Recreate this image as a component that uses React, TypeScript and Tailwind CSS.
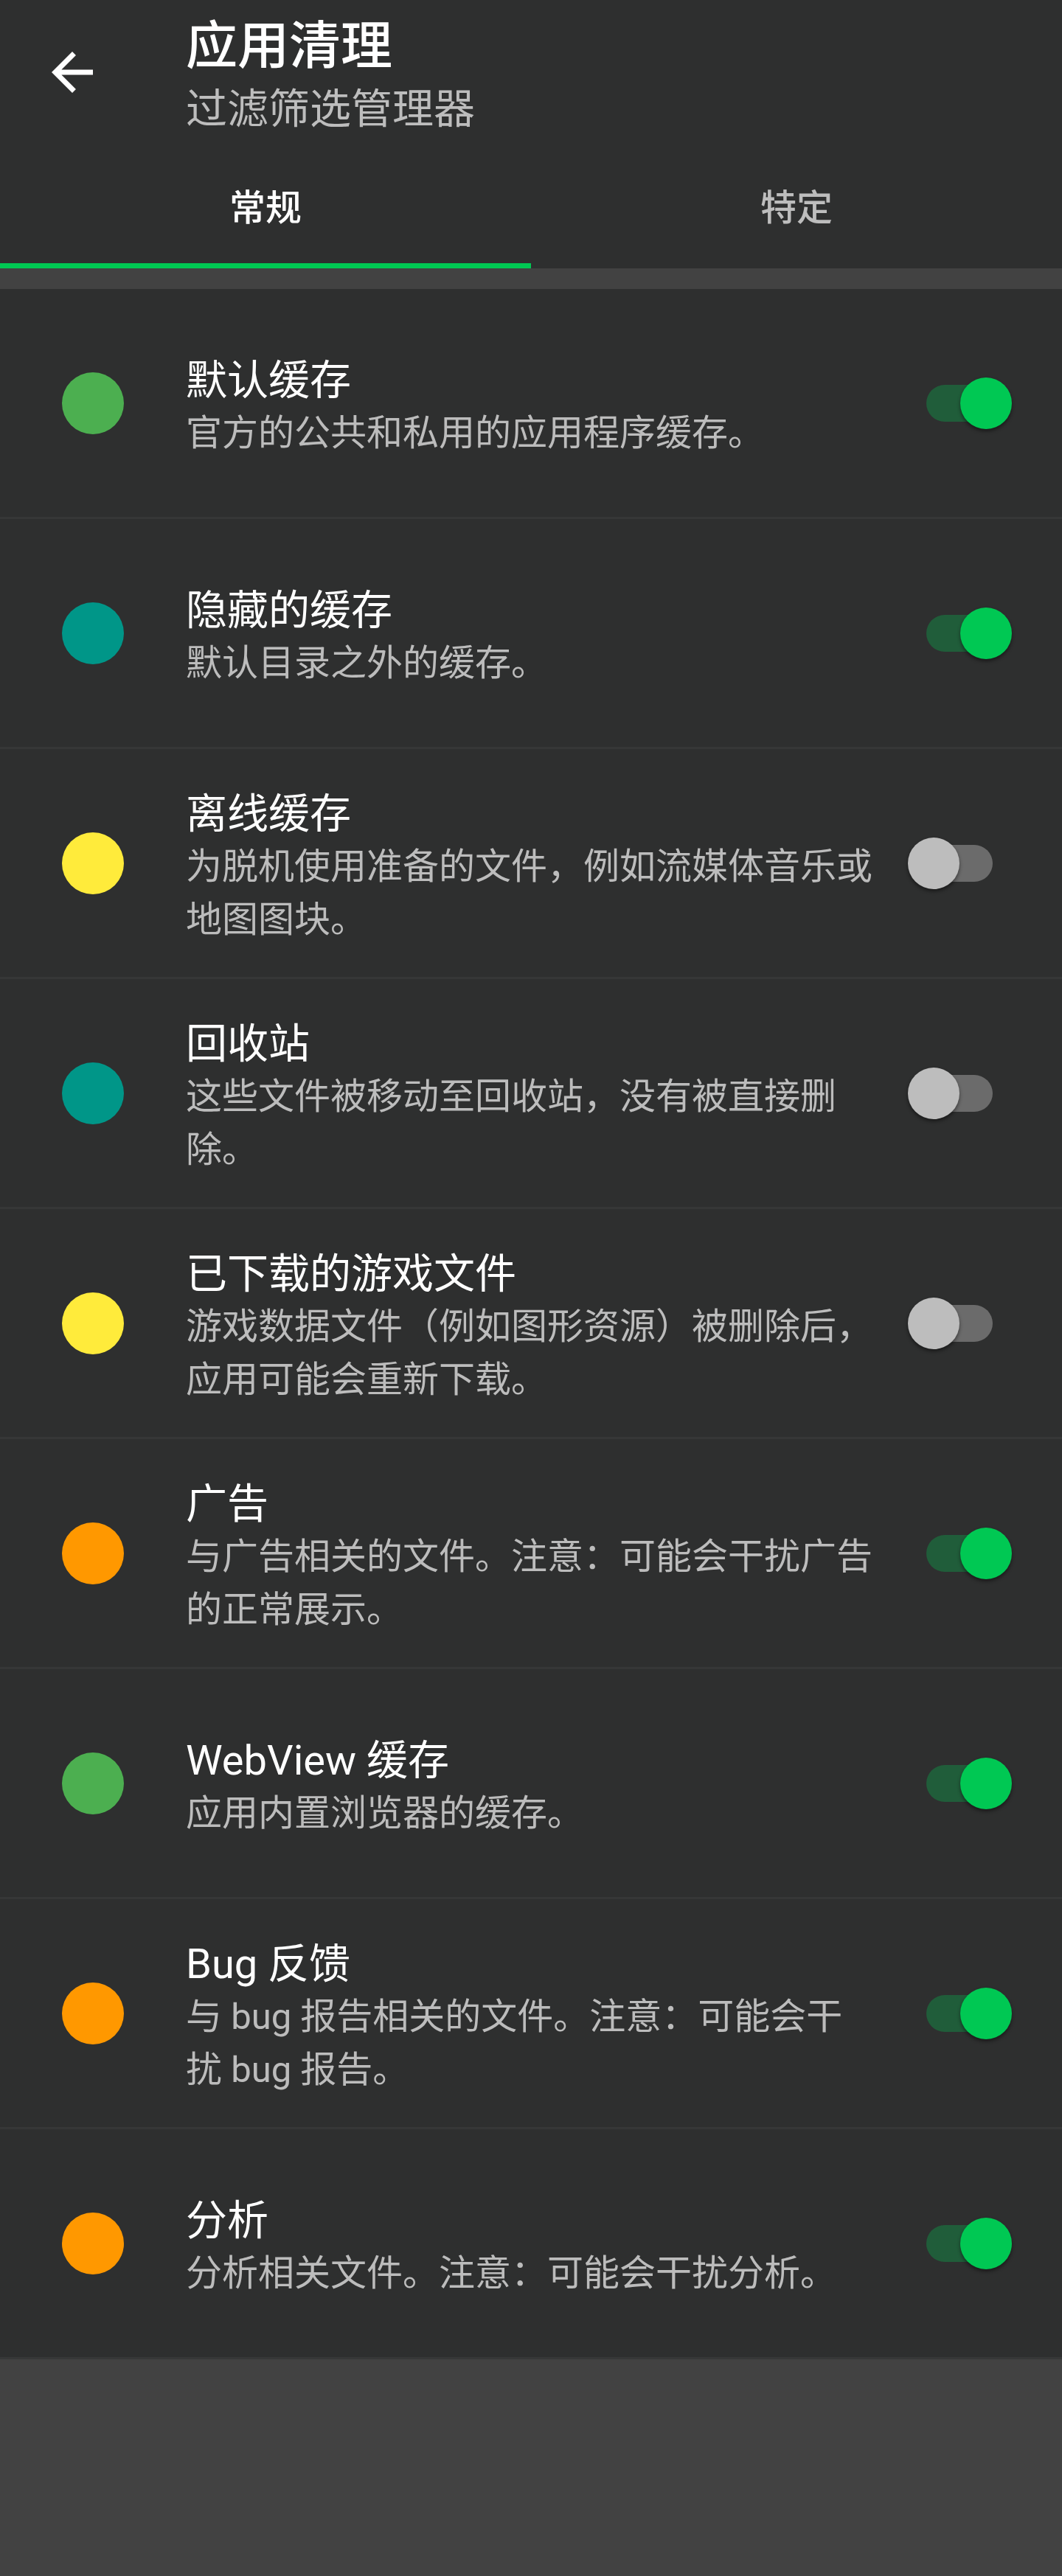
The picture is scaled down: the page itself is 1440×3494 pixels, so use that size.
import React from "react";

type Filter = {
  title: string;
  desc: string;
  color: string;
  on: boolean;
};

const filters: Filter[] = [
  { title: "默认缓存", desc: "官方的公共和私用的应用程序缓存。", color: "bg-[#4caf50]", on: true },
  { title: "隐藏的缓存", desc: "默认目录之外的缓存。", color: "bg-[#009688]", on: true },
  { title: "离线缓存", desc: "为脱机使用准备的文件，例如流媒体音乐或地图图块。", color: "bg-[#ffeb3b]", on: false },
  { title: "回收站", desc: "这些文件被移动至回收站，没有被直接删除。", color: "bg-[#009688]", on: false },
  { title: "已下载的游戏文件", desc: "游戏数据文件（例如图形资源）被删除后，应用可能会重新下载。", color: "bg-[#ffeb3b]", on: false },
  { title: "广告", desc: "与广告相关的文件。注意：可能会干扰广告的正常展示。", color: "bg-[#ff9800]", on: true },
  { title: "WebView 缓存", desc: "应用内置浏览器的缓存。", color: "bg-[#4caf50]", on: true },
  { title: "Bug 反馈", desc: "与 bug 报告相关的文件。注意：可能会干扰 bug 报告。", color: "bg-[#ff9800]", on: true },
  { title: "分析", desc: "分析相关文件。注意：可能会干扰分析。", color: "bg-[#ff9800]", on: true },
];

const Toggle: React.FC<{ on: boolean }> = ({ on }) => (
  <div className="relative w-[141px] h-[70px] shrink-0">
    <div
      className={
        on
          ? "absolute left-[25px] right-[26px] top-[10px] h-[50px] rounded-full bg-[#205d3a]"
          : "absolute left-[25px] right-[26px] top-[10px] h-[50px] rounded-full bg-[#6b6b6b]"
      }
    />
    <div
      className={
        on
          ? "absolute right-0 top-0 w-[70px] h-[70px] rounded-full bg-[#00c853] shadow-[0_3px_5px_rgba(0,0,0,0.45)]"
          : "absolute left-0 top-0 w-[70px] h-[70px] rounded-full bg-[#bdbdbd] shadow-[0_3px_5px_rgba(0,0,0,0.45)]"
      }
    />
  </div>
);

const FilterRow: React.FC<{ item: Filter }> = ({ item }) => (
  <div className="flex items-center h-[312px] bg-[#2e2f2f] border-b-[3px] border-[#363737]">
    <div className={`ml-[84px] w-[84px] h-[84px] rounded-full shrink-0 ${item.color}`} />
    <div className="ml-[84px] w-[938px] shrink-0 flex flex-col pt-[10px]">
      <div className="text-[56px] leading-[72px] text-white">{item.title}</div>
      <div className="text-[49px] leading-[72px] text-[#bcbcbc]">{item.desc}</div>
    </div>
    <div className="ml-auto mr-[68px]">
      <Toggle on={item.on} />
    </div>
  </div>
);

export default function App() {
  return (
    <div
      className="w-[1440px] min-h-[3494px] bg-[#424242]"
      style={{ fontFamily: "Roboto, 'Noto Sans CJK SC', sans-serif" }}
    >
      {/* toolbar */}
      <div className="bg-[#2e2f2f]">
        <div className="flex items-center h-[196px]">
          <div className="w-[196px] h-[196px] flex items-center justify-center shrink-0">
            <svg width="84" height="84" viewBox="0 0 24 24" fill="#ffffff">
              <path d="M20 11H7.83l5.59-5.59L12 4l-8 8 8 8 1.41-1.41L7.83 13H20v-2z" />
            </svg>
          </div>
          <div className="ml-[56px] flex flex-col pt-[10px]">
            <div className="text-[70px] leading-[90px] text-white font-medium">应用清理</div>
            <div className="text-[56px] leading-[81px] text-[#bdbdbd]">过滤筛选管理器</div>
          </div>
        </div>

        {/* tabs */}
        <div className="flex h-[168px]">
          <div className="flex-1 flex flex-col">
            <div className="flex-1 flex items-center justify-center pt-[12px] text-[49px] text-white font-medium">常规</div>
            <div className="h-[7px] bg-[#00c853]" />
          </div>
          <div className="flex-1 flex flex-col">
            <div className="flex-1 flex items-center justify-center pt-[12px] text-[49px] text-[#bdbdbd] font-medium">特定</div>
            <div className="h-[7px]" />
          </div>
        </div>
      </div>

      <div className="pt-[28px]">
        {filters.map((f) => (
          <FilterRow key={f.title} item={f} />
        ))}
      </div>
    </div>
  );
}
